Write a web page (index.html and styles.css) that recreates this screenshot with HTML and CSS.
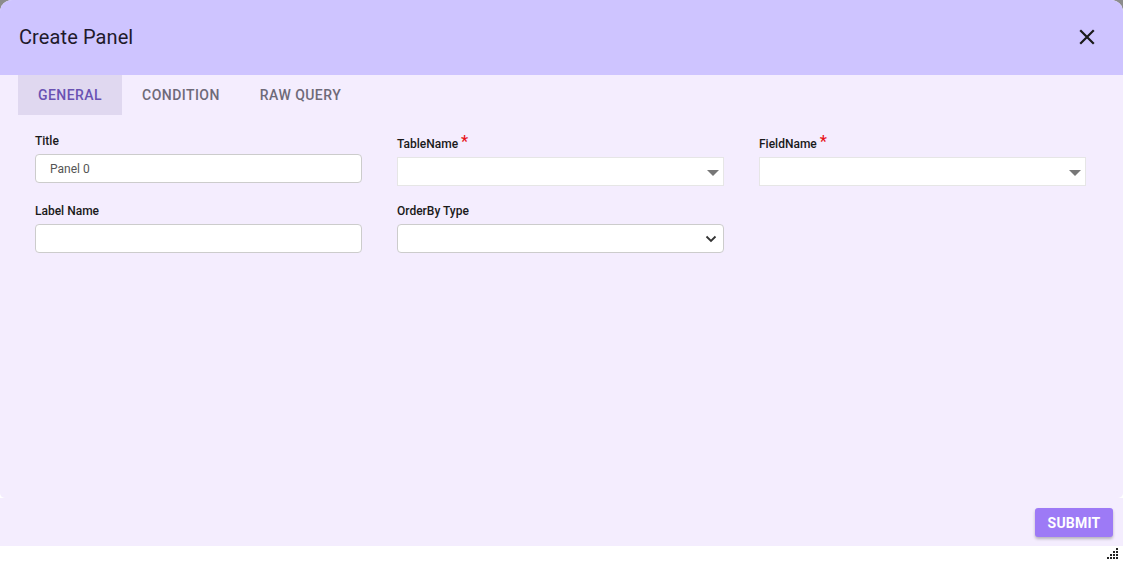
FILE: index.html
```html
<!DOCTYPE html>
<html lang="en">
<head>
<meta charset="utf-8">
<title>Create Panel</title>
<link rel="stylesheet" href="styles.css">
</head>
<body>
<div class="screen">
  <div class="dialog">
    <header class="dialog-header">
      <h1 class="dialog-title">Create Panel</h1>
      <button class="close-btn" aria-label="Close">
        <svg width="16" height="16" viewBox="0 0 16 16"><path d="M2 2 L14 14 M14 2 L2 14" stroke="#1a1a1a" stroke-width="2.2" stroke-linecap="square" fill="none"/></svg>
      </button>
    </header>
    <div class="dialog-body">
      <nav class="tabs">
        <div class="tab active">GENERAL</div>
        <div class="tab">CONDITION</div>
        <div class="tab">RAW QUERY</div>
      </nav>
      <form class="form-grid">
        <div class="field">
          <label class="field-label">Title</label>
          <div class="text-input">Panel 0</div>
        </div>
        <div class="field req-field">
          <label class="field-label">TableName <span class="req">*</span></label>
          <div class="flat-select"><span class="caret"></span></div>
        </div>
        <div class="field req-field">
          <label class="field-label">FieldName <span class="req">*</span></label>
          <div class="flat-select"><span class="caret"></span></div>
        </div>
        <div class="field">
          <label class="field-label">Label Name</label>
          <div class="text-input"></div>
        </div>
        <div class="field">
          <label class="field-label">OrderBy Type</label>
          <div class="text-input native-select">
            <svg width="12" height="8" viewBox="0 0 12 8"><path d="M1.5 1.5 L6 6 L10.5 1.5" stroke="#333" stroke-width="1.8" fill="none"/></svg>
          </div>
        </div>
      </form>
    </div>
    <footer class="dialog-footer">
      <button class="submit-btn">SUBMIT</button>
    </footer>
  </div>
  <div class="bottom-strip">
    <svg class="grip" width="12" height="12" viewBox="0 0 12 12">
      <rect x="9" y="0" width="2" height="2" fill="#222"/>
      <rect x="6" y="3" width="2" height="2" fill="#222"/>
      <rect x="9" y="3" width="2" height="2" fill="#222"/>
      <rect x="3" y="6" width="2" height="2" fill="#222"/>
      <rect x="6" y="6" width="2" height="2" fill="#222"/>
      <rect x="9" y="6" width="2" height="2" fill="#222"/>
      <rect x="0" y="9" width="2" height="2" fill="#222"/>
      <rect x="3" y="9" width="2" height="2" fill="#222"/>
      <rect x="6" y="9" width="2" height="2" fill="#222"/>
      <rect x="9" y="9" width="2" height="2" fill="#222"/>
    </svg>
  </div>
</div>
</body>
</html>
```

FILE: styles.css
```css
* { box-sizing: border-box; }
html, body { margin: 0; padding: 0; }
body {
  width: 1123px;
  height: 562px;
  overflow: hidden;
  font-family: Roboto, "Liberation Sans", Arial, sans-serif;
  background: #ffffff;
}
.screen {
  width: 1123px;
  height: 562px;
  display: flex;
  flex-direction: column;
  background: linear-gradient(#8c8c8c 0 14px, #ffffff 14px);
}
.dialog {
  height: 546px;
  display: flex;
  flex-direction: column;
  border-radius: 12px 12px 0 0;
  overflow: hidden;
  background: #ffffff;
}
.dialog-header {
  height: 75px;
  flex: none;
  background: #cec4ff;
  display: flex;
  align-items: center;
  justify-content: space-between;
  padding: 0 26px 0 19px;
}
.dialog-title {
  margin: 0 0 1px 0;
  font-size: 20px;
  font-weight: 400;
  color: #1f1a2b;
  letter-spacing: 0.1px;
}
.close-btn {
  border: 0;
  background: transparent;
  padding: 0;
  width: 20px;
  height: 20px;
  display: flex;
  align-items: center;
  justify-content: center;
  cursor: pointer;
  margin-top: -1px;
}
.dialog-body {
  flex: none;
  height: 423px;
  background: #f4edfe;
  border-radius: 0 0 5px 5px;
}
.tabs {
  display: flex;
  height: 40px;
  padding-left: 18px;
}
.tab {
  padding: 0 20px;
  display: flex;
  align-items: center;
  font-size: 14px;
  font-weight: 500;
  color: #6e6a78;
  letter-spacing: 0.45px;
}
.tab.active {
  background: #e0d8f0;
  color: #6a52b3;
}
.form-grid {
  display: grid;
  grid-template-columns: 327px 327px 327px;
  column-gap: 35px;
  row-gap: 18px;
  padding: 19px 0 0 35px;
  margin: 0;
  align-items: start;
}
.field {
  display: flex;
  flex-direction: column;
}
.field-label {
  font-size: 12px;
  font-weight: 500;
  color: #1a1a1a;
  line-height: 14px;
  margin-bottom: 6px;
}
.req {
  color: #e8121a;
  font-size: 16px;
  line-height: 14px;
  vertical-align: 1px;
}
.req-field .field-label {
  padding-top: 1px;
}
.text-input {
  height: 29px;
  background: #ffffff;
  border: 1px solid #cccccc;
  border-radius: 4px;
  display: flex;
  align-items: center;
  padding-left: 14px;
  font-size: 12px;
  color: #555;
}
.native-select {
  justify-content: flex-end;
  padding-right: 6px;
}
.flat-select {
  height: 29px;
  background: #ffffff;
  border: 1px solid #e6e6e6;
  display: flex;
  align-items: center;
  justify-content: flex-end;
  padding-right: 4px;
}
.caret {
  width: 0;
  height: 0;
  border-left: 6px solid transparent;
  border-right: 6px solid transparent;
  border-top: 6px solid #777777;
  margin-top: 2px;
}
.dialog-footer {
  flex: 1;
  background: #f4edfe;
  display: flex;
  justify-content: flex-end;
  align-items: flex-start;
  padding: 10px 10px 0 0;
}
.submit-btn {
  width: 78px;
  height: 29px;
  border: 0;
  border-radius: 3px;
  background: #9d7af6;
  color: #ffffff;
  font-family: Roboto, "Liberation Sans", Arial, sans-serif;
  font-size: 14px;
  font-weight: 700;
  letter-spacing: 0.2px;
  box-shadow: 0 2px 3px rgba(0,0,0,0.25);
  padding: 0;
}
.bottom-strip {
  flex: 1;
  background: #ffffff;
  display: flex;
  justify-content: flex-end;
  align-items: flex-start;
  padding: 2px 4px 0 0;
}
.grip { display: block; }
```
